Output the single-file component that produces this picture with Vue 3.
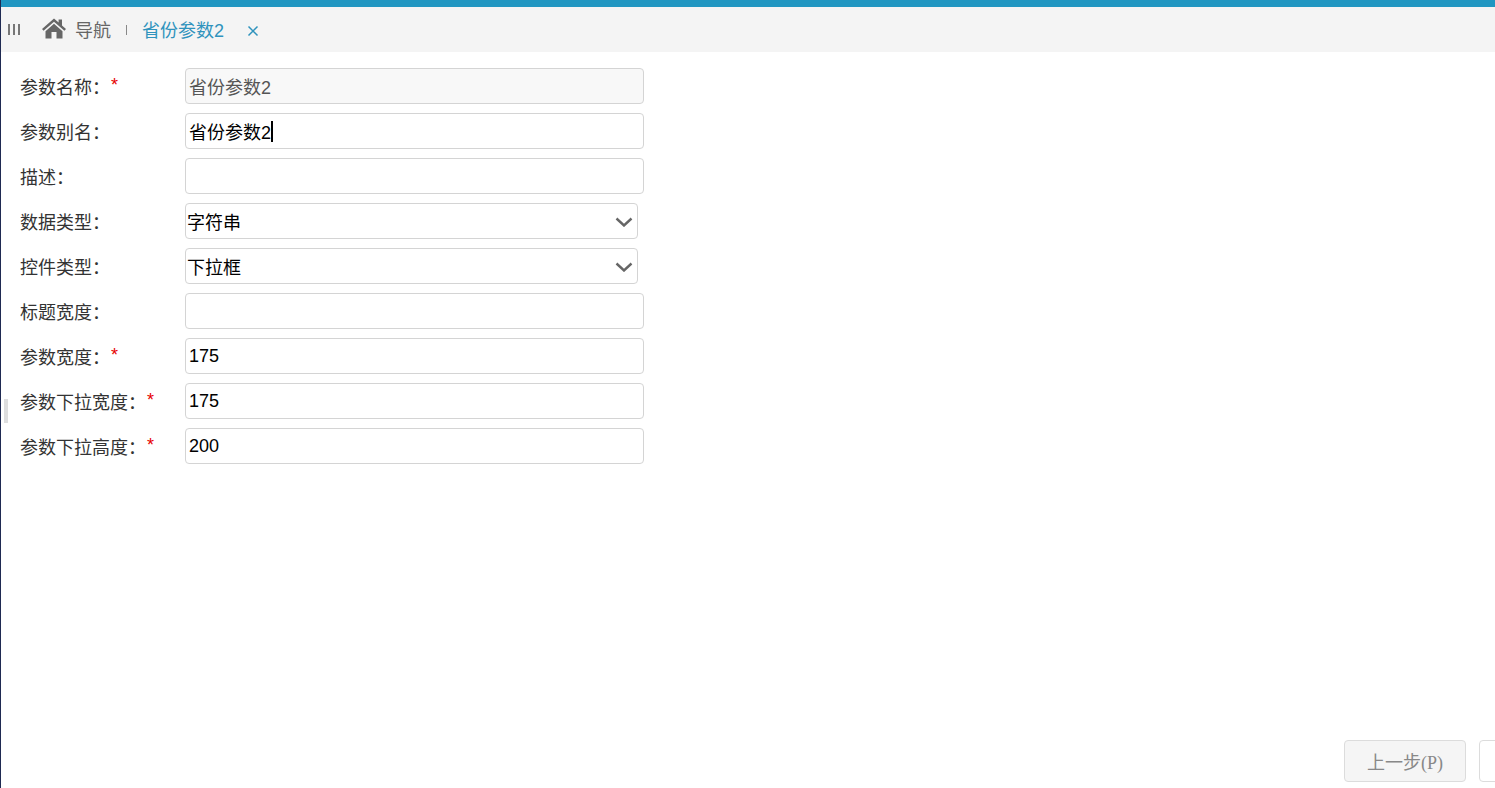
<script setup>
const colon = '\uFF1A'
const rows = [
  { label: '参数名称', required: true, value: '省份参数2', disabled: true },
  { label: '参数别名', value: '省份参数2', caret: true },
  { label: '描述', value: '' },
  { label: '数据类型', select: true, value: '字符串' },
  { label: '控件类型', select: true, value: '下拉框' },
  { label: '标题宽度', value: '' },
  { label: '参数宽度', required: true, value: '175' },
  { label: '参数下拉宽度', required: true, value: '175' },
  { label: '参数下拉高度', required: true, value: '200' }
]
</script>

<template>
  <div class="page">
    <div class="topbar"></div>
    <nav class="tabs">
      <span class="bars"><i></i><i></i><i></i></span>
      <svg class="home" viewBox="0 0 26 22" width="26" height="22">
        <path fill="#666" d="M13 1.5 1 12l1.6 1.8L13 4.8l10.4 9L25 12l-4-3.5V2.5h-3.4v3L13 1.5Z"/>
        <path fill="#666" d="M13 6.8 4.5 14.2V21.500h6v-6.500h5v6.500h6v-7.300L13 6.800Z"/>
      </svg>
      <span class="nav-text">导航</span>
      <span class="sep"></span>
      <span class="active-tab">省份参数2</span>
      <svg class="close" viewBox="0 0 12 12" width="12" height="12">
        <path d="M1.500 1.500 10.500 10.500M10.500 1.500 1.500 10.500" stroke="#2f93bd" stroke-width="1.500" fill="none"/>
      </svg>
    </nav>
    <main class="form">
      <div v-for="row in rows" :key="row.label" class="row">
        <label class="label">
          <span>{{ row.label + colon }}</span><span v-if="row.required" class="star">*</span>
        </label>
        <div v-if="row.select" class="select">
          <span class="select-text">{{ row.value }}</span>
          <svg viewBox="0 0 18 10" width="18" height="10">
            <path d="M1.500 1.500 9 8.500 16.500 1.500" stroke="#666" stroke-width="2.400" fill="none"/>
          </svg>
        </div>
        <div v-else class="input" :class="{ disabled: row.disabled }">
          <span>{{ row.value }}</span><i v-if="row.caret" class="caret"></i>
        </div>
      </div>
    </main>
    <footer class="footer">
      <button class="btn">上一步(P)</button>
      <button class="btn next"></button>
    </footer>
    <div class="grip"></div>
  </div>
</template>

<style>
html, body { margin: 0; overflow: hidden; background: #fff; }
</style>

<style scoped>
.page {
  position: relative;
  height: 788px;
  display: flex;
  flex-direction: column;
  box-sizing: border-box;
  border-left: 1px solid #1f2a52;
  font-family: "Noto Sans CJK SC", "Liberation Sans", sans-serif;
  font-size: 18px;
  color: #333;
  overflow: hidden;
}
.topbar { height: 7px; background: #2196c1; flex: none; margin-left: -1px; }
.tabs {
  height: 45px;
  flex: none;
  background: #f4f4f4;
  display: flex;
  align-items: center;
  color: #666;
}
.bars { display: flex; gap: 3px; margin-left: 7px; }
.bars i { width: 2px; height: 11px; background: #777; }
.home { margin-left: 21px; margin-top: -4px; }
.nav-text { margin-left: 8px; margin-top: -2px; }
.sep { width: 1px; height: 10px; background: #888; margin-left: 15px; }
.active-tab {
  margin-left: 15px;
  margin-top: -2px;
  color: #2f93bd;
  font-family: "Liberation Sans", "Noto Sans CJK SC", sans-serif;
}
.close { margin-left: 23px; margin-top: 2px; }
.form {
  flex: 1;
  padding: 16px 0 0 19px;
  display: flex;
  flex-direction: column;
  gap: 9px;
}
.row { display: flex; align-items: center; height: 36px; }
.label { width: 165px; flex: none; display: flex; align-items: center; }
.star { color: #e60000; margin-left: 1px; margin-top: -2px; font-family: "Liberation Sans", sans-serif; }
.input, .select {
  box-sizing: border-box;
  height: 36px;
  border: 1px solid #d4d4d4;
  border-radius: 4px;
  display: flex;
  align-items: center;
  color: #000;
  background: #fff;
  font-family: "Liberation Sans", "Noto Sans CJK SC", sans-serif;
}
.input { width: 459px; padding-left: 3px; }
.input.disabled { background: #f8f8f8; color: #555; }
.select { width: 453px; padding: 0 4px 0 1px; justify-content: space-between; }
.select-text { margin-top: -1px; }
.select svg { margin-top: 2px; }
.caret { width: 2px; height: 21px; background: #000; }
.footer {
  flex: none;
  display: flex;
  justify-content: flex-end;
  gap: 13px;
  padding-bottom: 6px;
  margin-right: -106px;
}
.btn {
  box-sizing: border-box;
  width: 122px;
  height: 42px;
  border: 1px solid #dcdcdc;
  border-radius: 4px;
  background: #f5f5f5;
  color: #888;
  font-size: 18px;
  font-family: "Liberation Serif", "Noto Sans CJK SC", serif;
  padding: 0;
}
.btn.next { background: #fff; }
.grip {
  position: absolute;
  left: 3px;
  top: 399px;
  width: 4px;
  height: 24px;
  background: #dedede;
}
</style>
